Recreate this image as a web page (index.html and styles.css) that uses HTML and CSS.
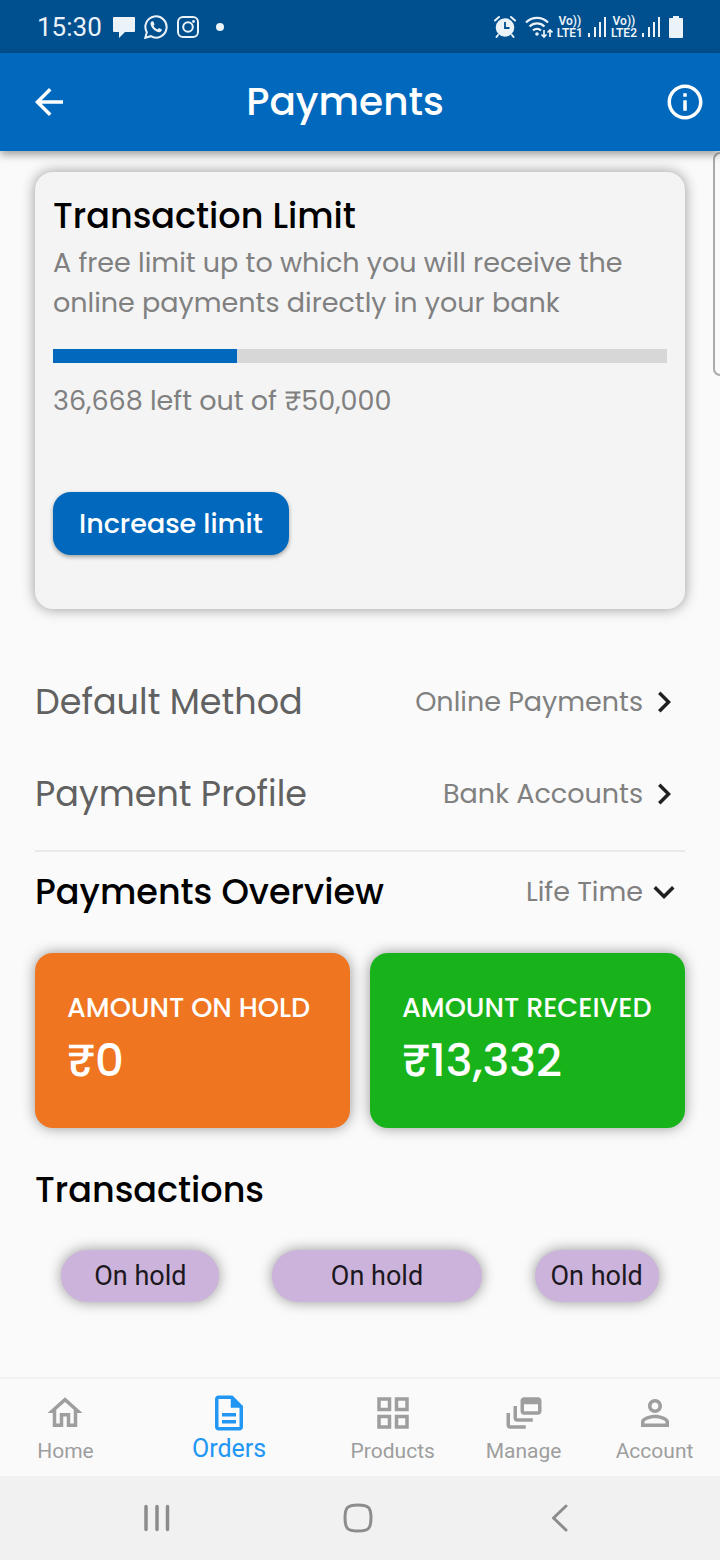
FILE: index.html
```html
<!DOCTYPE html>
<html lang="en">
<head>
<meta charset="utf-8">
<meta name="viewport" content="width=device-width, initial-scale=1">
<title>Payments</title>
<link rel="stylesheet" href="styles.css">
</head>
<body>
<div class="screen">
  <div class="status">
    <div class="status-group">
      <span class="clock">15:30</span>
      <svg class="status-icon" viewBox="0 0 24 24"><path fill="currentColor" d="M2 2h20q1 0 1 1v13q0 1-1 1h-9l-6 6v-6H2q-1 0-1-1V3q0-1 1-1z"/></svg>
      <svg class="status-icon" viewBox="0 0 24 24"><path fill="none" stroke="currentColor" stroke-width="2" d="M1.300 22.800l1.500-5.600a10.600 10.600 0 1 1 4 4z"/><path fill="currentColor" d="M8.200 6.300c-.8.2-1.700 1.200-1.700 2.500 0 3.600 5.300 8.700 8.900 8.400 1.400-.1 2.400-1 2.500-2.600l-3-1.600-1.400 1.500c-1.800-.7-3.200-2-4-3.700l1.100-1.400-1.200-3z"/></svg>
      <svg class="status-icon" viewBox="0 0 24 24"><g fill="none" stroke="currentColor" stroke-width="2"><rect x="2" y="2" width="20" height="20" rx="5"/><circle cx="12" cy="12" r="4.800"/></g><circle cx="17.500" cy="6.500" r="1.400" fill="currentColor"/></svg>
      <span class="dot"></span>
    </div>
    <div class="status-group status-right">
      <svg class="status-icon" viewBox="0 0 24 24"><path fill="none" stroke="currentColor" stroke-width="2" stroke-linecap="round" d="M2 5.500l4-3.500M22 5.500l-4-3.500M5 20l-1.500 2M19 20l1.500 2"/><circle cx="12" cy="12.500" r="9.300" fill="currentColor"/><path fill="none" stroke="#004f8e" stroke-width="1.800" d="M12 7v6h4.500"/></svg>
      <svg class="wifi" viewBox="0 0 28 24"><g fill="none" stroke="currentColor" stroke-width="2.200"><path d="M1 7.500a15.500 15.500 0 0 1 22 0M4.500 11.500a10.500 10.500 0 0 1 15 0M8 15.500a5.600 5.600 0 0 1 8 0"/></g><circle cx="12" cy="19" r="1.800" fill="currentColor"/><path fill="none" stroke="currentColor" stroke-width="1.700" d="M19 15v7M16.500 19.500l2.500 2.500 2.500-2.500M25 22v-7M22.500 17.500l2.500-2.500 2.500 2.500"/></svg>
      <span class="lte"><span>Vo))</span><span>LTE1</span></span>
      <svg class="signal" viewBox="0 0 20 22"><path fill="none" stroke="currentColor" stroke-width="2" d="M2 21v-4M8 21V11M13 21V6M18 21V1"/></svg>
      <span class="lte"><span>Vo))</span><span>LTE2</span></span>
      <svg class="signal" viewBox="0 0 20 22"><path fill="none" stroke="currentColor" stroke-width="2" d="M2 21v-4M8 21V11M13 21V6M18 21V1"/></svg>
      <svg class="battery" viewBox="0 0 14 24"><path fill="currentColor" d="M4 1h6v2h3q1 0 1 1v18q0 1-1 1H1q-1 0-1-1V4q0-1 1-1h3z"/></svg>
    </div>
  </div>

  <header class="app-bar">
    <button class="icon-button" aria-label="Back"><svg class="icon" viewBox="0 0 24 24"><path fill="currentColor" d="M20 11H7.830l5.590-5.590L12 4l-8 8 8 8 1.410-1.410L7.830 13H20v-2z"/></svg></button>
    <h1>Payments</h1>
    <button class="icon-button info" aria-label="Information"><svg class="icon" viewBox="0 0 24 24"><path fill="currentColor" d="M11 7h2v2h-2zm0 4h2v6h-2zm1-9C6.480 2 2 6.480 2 12s4.480 10 10 10 10-4.480 10-10S17.520 2 12 2zm0 18c-4.410 0-8-3.590-8-8s3.590-8 8-8 8 3.590 8 8-3.590 8-8 8z"/></svg></button>
  </header>

  <main class="content">
    <span class="edge-handle"></span>
    <section class="limit-card">
      <h2>Transaction Limit</h2>
      <p>A free limit up to which you will receive the online payments directly in your bank</p>
      <progress class="meter" max="100" value="30" aria-label="Limit used"></progress>
      <p class="remaining">36,668 left out of ₹50,000</p>
      <button class="primary">Increase limit</button>
    </section>

    <section class="settings">
      <button class="setting"><span class="setting-name">Default Method</span><span class="value">Online Payments</span><svg class="icon" viewBox="0 0 24 24"><path fill="currentColor" d="M10 6L8.590 7.410 13.170 12l-4.580 4.590L10 18l6-6z"/></svg></button>
      <button class="setting"><span class="setting-name">Payment Profile</span><span class="value">Bank Accounts</span><svg class="icon" viewBox="0 0 24 24"><path fill="currentColor" d="M10 6L8.590 7.410 13.170 12l-4.580 4.590L10 18l6-6z"/></svg></button>
    </section>

    <section class="overview">
      <div class="overview-head">
        <h2>Payments Overview</h2>
        <div class="period">
          <select class="value" aria-label="Period"><option>Life Time</option></select>
          <svg class="icon" viewBox="0 0 24 24"><path fill="currentColor" d="M16.590 8.590L12 13.170 7.410 8.590 6 10l6 6 6-6z"/></svg>
        </div>
      </div>
      <div class="totals">
        <div class="total hold"><span class="total-name">AMOUNT ON HOLD</span><strong>₹0</strong></div>
        <div class="total received"><span class="total-name">AMOUNT RECEIVED</span><strong>₹13,332</strong></div>
      </div>
    </section>

    <section class="transactions">
      <h2>Transactions</h2>
      <div class="chips">
        <button class="chip medium">On hold</button>
        <button class="chip wide">On hold</button>
        <button class="chip">On hold</button>
      </div>
    </section>
  </main>

  <nav class="tabs">
    <a class="tab" href="#home"><svg class="tab-icon" viewBox="0 0 24 24"><path fill="currentColor" d="M12 5.690l5 4.500V18h-2v-6H9v6H7v-7.810l5-4.500M12 3L2 12h3v8h6v-6h2v6h6v-8h3L12 3z"/></svg><span>Home</span></a>
    <a class="tab active" href="#orders" aria-current="page"><svg class="tab-icon" viewBox="0 0 24 24"><path fill="currentColor" fill-rule="evenodd" d="M14 2H6c-1.100 0-2 .9-2 2v16c0 1.100.9 2 2 2h12c1.100 0 2-.9 2-2V8l-6-6zM6 20V4h7v5h5v11H6zM8 16h8v2H8zM8 12h8v2H8z"/></svg><span>Orders</span></a>
    <a class="tab" href="#products"><svg class="tab-icon" viewBox="0 0 24 24"><path fill="none" stroke="currentColor" stroke-width="2" d="M4 4h6v6H4zM14 4h6v6h-6zM4 14h6v6H4zM14 14h6v6h-6z"/></svg><span>Products</span></a>
    <a class="tab" href="#manage"><svg class="tab-icon" viewBox="0 0 24 24"><path fill="currentColor" fill-rule="evenodd" d="M8 8H6v7c0 1.100.9 2 2 2h9v-2H8V8zM20 3h-8c-1.100 0-2 .9-2 2v6c0 1.100.9 2 2 2h8c1.100 0 2-.9 2-2V5c0-1.100-.9-2-2-2zm0 8h-8V7h8v4zM4 12H2v7c0 1.100.9 2 2 2h9v-2H4v-7z"/></svg><span>Manage</span></a>
    <a class="tab" href="#account"><svg class="tab-icon" viewBox="0 0 24 24"><path fill="currentColor" fill-rule="evenodd" d="M12 6c1.100 0 2 .9 2 2s-.9 2-2 2-2-.9-2-2 .9-2 2-2m0 9c2.700 0 5.800 1.290 6 2v1H6v-.99c.2-.72 3.300-2.010 6-2.010m0-11C9.790 4 8 5.790 8 8s1.790 4 4 4 4-1.790 4-4-1.790-4-4-4zm0 9c-2.670 0-8 1.340-8 4v3h16v-3c0-2.660-5.330-4-8-4z"/></svg><span>Account</span></a>
  </nav>

  <div class="system-nav">
    <button class="system-button" aria-label="Recent apps"><svg class="system-icon" viewBox="0 0 32 32"><path fill="none" stroke="currentColor" stroke-width="3.500" stroke-linecap="round" d="M5 4.500v23M16 4.500v23M26.500 4.500v23"/></svg></button>
    <button class="system-button" aria-label="Home screen"><svg class="system-icon" viewBox="0 0 32 32"><path fill="none" stroke="currentColor" stroke-width="3" d="M16 3c10.500 0 13 2.500 13 13s-2.500 13-13 13S3 26.500 3 16 5.500 3 16 3z"/></svg></button>
    <button class="system-button" aria-label="Go back"><svg class="system-icon" viewBox="0 0 32 32"><path fill="none" stroke="currentColor" stroke-width="3" stroke-linecap="round" stroke-linejoin="round" d="M24 4L11.500 16 24 28"/></svg></button>
  </div>
</div>
</body>
</html>
```

FILE: styles.css
```css
* {
  box-sizing: border-box;
}

body {
  margin: 0;
  background: #fafafa;
  font-family: Poppins, Inter, "Open Sans", sans-serif;
  font-size: 27px;
  line-height: 40px;
  color: #808080;
}

h1,
h2,
p {
  margin: 0;
}

h2 {
  font-size: 35px;
  font-weight: 500;
  line-height: 52px;
  color: #000;
}

button {
  margin: 0;
  padding: 0;
  border: 0;
  background: none;
  font: inherit;
  color: inherit;
}

svg {
  display: block;
  flex: none;
}

.icon {
  width: 42px;
  height: 42px;
}

.screen {
  display: flex;
  flex-direction: column;
  min-height: 100vh;
}

.status {
  display: flex;
  justify-content: space-between;
  align-items: center;
  height: 53px;
  padding: 0 36px 0 37px;
  background: #004f8e;
  color: #ebf2f8;
  font-family: Roboto, sans-serif;
}

.status-group {
  display: flex;
  align-items: center;
  gap: 8px;
}

.status-right {
  gap: 4px;
}

.clock {
  font-size: 26px;
  margin-right: 2px;
}

.status-icon {
  width: 24px;
  height: 24px;
}

.dot {
  width: 8px;
  height: 8px;
  margin-left: 8px;
  border-radius: 50%;
  background: currentColor;
}

.wifi {
  width: 28px;
  height: 24px;
  margin-left: 4px;
}

.lte {
  display: flex;
  flex-direction: column;
  align-items: center;
  font-size: 12px;
  font-weight: 600;
  line-height: 12px;
}

.signal {
  width: 20px;
  height: 22px;
}

.battery {
  width: 14px;
  height: 24px;
  margin-left: 4px;
  margin-right: 1px;
}

.app-bar {
  position: relative;
  z-index: 1;
  display: grid;
  grid-template-columns: 84px 1fr 114px;
  align-items: center;
  height: 98px;
  background: #0068bd;
  box-shadow: 0 4px 8px rgba(0, 0, 0, 0.35);
  color: #fff;
}

.app-bar h1 {
  font-size: 39px;
  font-weight: 500;
  line-height: 56px;
  text-align: center;
}

.icon-button {
  display: flex;
  padding: 14px 14px 14px 28px;
}

.info {
  justify-self: end;
  padding: 14px;
}

.content {
  position: relative;
  flex: 1;
  padding: 21px 35px 24px;
}

.edge-handle {
  position: absolute;
  top: 1px;
  right: 0;
  width: 7px;
  height: 224px;
  border: 2px solid #aaa;
  border-right: 0;
  border-radius: 8px 0 0 8px;
}

.limit-card {
  padding: 18px 18px 54px;
  border-radius: 18px;
  background: #f4f4f4;
  box-shadow: 0 0 14px rgba(0, 0, 0, 0.4);
}

.limit-card p {
  margin-top: 1px;
}

.meter {
  display: block;
  width: 100%;
  height: 14px;
  margin-top: 26px;
  border: 0;
  appearance: none;
  background: #d7d7d7;
}

.meter::-webkit-progress-bar {
  background: #d7d7d7;
}

.meter::-webkit-progress-value {
  background: #0068bd;
}

.limit-card .remaining {
  margin-top: 18px;
}

.primary {
  margin-top: 71px;
  padding: 12px 26px 11px;
  border-radius: 18px;
  background: #0068bd;
  box-shadow: 0 2px 4px rgba(0, 0, 0, 0.35);
  color: #fff;
  font-weight: 500;
}

.settings {
  padding: 47px 0 10px;
  border-bottom: 2px solid #e9e9e9;
}

.setting {
  display: flex;
  align-items: center;
  width: 100%;
  height: 92px;
  text-align: left;
}

.setting .icon,
.period .icon {
  color: #202020;
}

.setting-name {
  flex: 1;
  font-size: 35px;
  color: #616161;
}

.overview-head {
  display: flex;
  justify-content: space-between;
  align-items: center;
  height: 80px;
}

.period {
  position: relative;
}

.period select {
  height: 42px;
  margin: 0;
  padding: 0 42px 0 0;
  border: 0;
  appearance: none;
  background: none;
  font: inherit;
  color: inherit;
}

.period .icon {
  position: absolute;
  top: 0;
  right: 0;
  pointer-events: none;
}

.totals {
  display: grid;
  grid-template-columns: 1fr 1fr;
  gap: 20px;
  margin-top: 21px;
}

.total {
  display: flex;
  flex-direction: column;
  padding: 35px 0 35px 32px;
  border-radius: 18px;
  box-shadow: 0 0 14px rgba(0, 0, 0, 0.4);
  color: #fff;
}

.total-name {
  font-weight: 500;
  white-space: nowrap;
}

.total strong {
  font-size: 45px;
  font-weight: 500;
  line-height: 65px;
}

.hold {
  background: #ef7520;
}

.received {
  background: #18b31b;
}

.transactions {
  padding-top: 36px;
}

.chips {
  display: flex;
  justify-content: space-around;
  margin-top: 34px;
}

.chip {
  height: 52px;
  padding: 0 16px;
  border-radius: 26px;
  background: #ccb3db;
  box-shadow: 0 0 14px rgba(0, 0, 0, 0.4);
  color: #1c1820;
  font-family: Roboto, sans-serif;
}

.medium {
  padding: 0 33px;
}

.wide {
  padding: 0 59px;
}

.tabs {
  display: flex;
  height: 99px;
  border-top: 2px solid #f0f0f0;
  font-family: Roboto, sans-serif;
  font-size: 21px;
  line-height: 24px;
}

.tab {
  display: flex;
  flex: 2 1 0;
  flex-direction: column;
  align-items: center;
  gap: 5px;
  padding-top: 13px;
  color: #9e9e9e;
  text-decoration: none;
}

.active {
  flex-grow: 3;
  gap: 3px;
  font-size: 25px;
  color: #2196f3;
}

.tab-icon {
  width: 42px;
  height: 42px;
}

.system-nav {
  display: flex;
  justify-content: center;
  align-items: center;
  height: 84px;
  padding-right: 5px;
  background: #f1f1f1;
  color: #8c8c8c;
}

.system-button {
  display: flex;
  flex: 0 0 28%;
  justify-content: center;
}

.system-icon {
  width: 32px;
  height: 32px;
}
```
